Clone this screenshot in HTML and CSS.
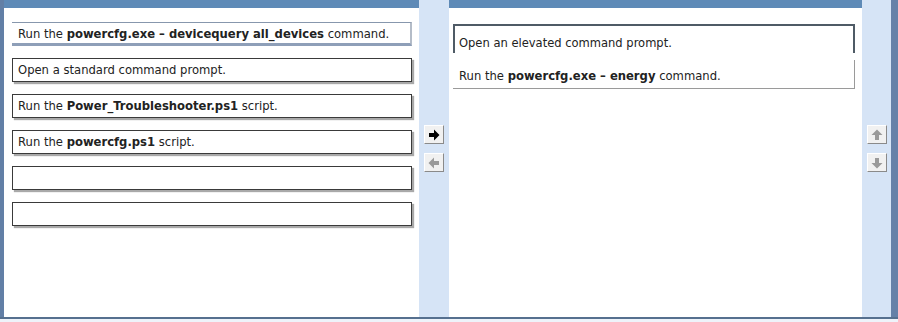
FILE: index.html
```html
<!DOCTYPE html>
<html lang="en">
<head>
    <meta charset="UTF-8">
    <title>Build List</title>
    <link rel="stylesheet" href="styles.css">
</head>
<body>
    <div class="frame">
        <div class="row">
            <div class="edge-left"></div>

            <!-- Available actions -->
            <div class="pane pane-left">
                <div class="pane-head"></div>
                <div class="source-list">
                    <div class="src-item dragging">Run the <b>powercfg.exe &ndash; devicequery all_devices</b> command.</div>
                    <div class="src-item">Open a standard command prompt.</div>
                    <div class="src-item">Run the <b>Power_Troubleshooter.ps1</b> script.</div>
                    <div class="src-item">Run the <b>powercfg.ps1</b> script.</div>
                    <div class="src-item"></div>
                    <div class="src-item"></div>
                </div>
            </div>

            <div class="mid">
                <button class="tool-btn" title="Move right">
                    <svg viewBox="0 0 12 12" width="12" height="12"><polygon points="1,4 6,4 6,0.5 11.5,6 6,11.5 6,8 1,8" fill="#000"/></svg>
                </button>
                <button class="tool-btn" title="Move left">
                    <svg viewBox="0 0 12 12" width="12" height="12"><polygon points="11,4 6,4 6,0.5 0.5,6 6,11.5 6,8 11,8" fill="#9a9a9a"/></svg>
                </button>
            </div>

            <!-- Answer area -->
            <div class="pane pane-right">
                <div class="pane-head"></div>
                <div class="answer-list">
                    <div class="ans-item selected">Open an elevated command prompt.</div>
                    <div class="ans-item">Run the <b>powercfg.exe &ndash; energy</b> command.</div>
                </div>
            </div>

            <div class="side">
                <button class="tool-btn" title="Move up">
                    <svg viewBox="0 0 12 12" width="12" height="12"><polygon points="4,11 4,6 0.5,6 6,0.5 11.5,6 8,6 8,11" fill="#9a9a9a"/></svg>
                </button>
                <button class="tool-btn" title="Move down">
                    <svg viewBox="0 0 12 12" width="12" height="12"><polygon points="4,1 4,6 0.5,6 6,11.5 11.5,6 8,6 8,1" fill="#9a9a9a"/></svg>
                </button>
            </div>

            <div class="edge-right"></div>
        </div>
        <div class="foot"></div>
    </div>
</body>
</html>
```

FILE: styles.css
```css
body {
    margin: 0;
    padding: 0;
    background: #fff;
    font-family: 'DejaVu Sans', Verdana, sans-serif;
    font-size: 11.6px;
    color: #222;
}
.frame {
    width: 898px;
    height: 322px;
    display: flex;
    flex-direction: column;
}
.row {
    display: flex;
    height: 317px;
}
.edge-left {
    width: 4px;
    background: #627fa6;
}
.edge-right {
    width: 7px;
    background: #6681a8;
}
.pane {
    display: flex;
    flex-direction: column;
    background: #fff;
}
.pane-left {
    width: 415px;
}
.pane-right {
    width: 413px;
}
.pane-head {
    height: 8px;
    background: #5e8ab7;
}

/* Source list on the left */
.source-list {
    display: flex;
    flex-direction: column;
    gap: 12px;
    padding: 14px 0 0 8px;
}
.src-item {
    box-sizing: border-box;
    width: 400px;
    height: 24px;
    padding: 0 5px;
    line-height: 22px;
    border: 1px solid #3a3a3a;
    box-shadow: 2px 2px 1px #a9a9a9;
    background: #fff;
    white-space: nowrap;
}
.src-item.dragging {
    border: none;
    border-top: 1px solid #8797ad;
    border-right: 2px solid #b4bcc8;
    border-bottom: 3px solid #8e9fb8;
    box-shadow: none;
    padding-left: 6px;
    line-height: 22px;
    overflow: hidden;
}

/* Middle and side columns with buttons */
.mid, .side {
    background: #d6e4f6;
    display: flex;
    flex-direction: column;
    align-items: center;
    gap: 9px;
    padding-top: 125px;
}
.mid {
    width: 30px;
}
.side {
    width: 29px;
}
.tool-btn {
    box-sizing: border-box;
    width: 20px;
    height: 19px;
    padding: 0;
    margin: 0;
    display: flex;
    align-items: center;
    justify-content: center;
    background: #f1f1f1;
    border: 1px solid;
    border-color: #ffffff #8a8a8a #8a8a8a #ffffff;
    cursor: pointer;
}

/* Answer list on the right */
.answer-list {
    display: flex;
    flex-direction: column;
    gap: 7px;
    padding: 16px 0 0 4px;
}
.ans-item {
    box-sizing: border-box;
    width: 402px;
    height: 29px;
    padding: 5px 6px 0;
    line-height: 22px;
    background: #fff;
    border-right: 1px solid #9a9a9a;
    border-bottom: 1px solid #9a9a9a;
    white-space: nowrap;
}
.ans-item.selected {
    font-family: 'DejaVu Sans Condensed', 'DejaVu Sans', sans-serif;
    font-size: 12.8px;
    padding: 6px 4px 0;
    border: 2px solid #4f5b66;
    border-bottom: none;
}

.foot {
    height: 5px;
    border-top: 2px solid #56708f;
    box-sizing: border-box;
    background: #eef3fa;
}
```
